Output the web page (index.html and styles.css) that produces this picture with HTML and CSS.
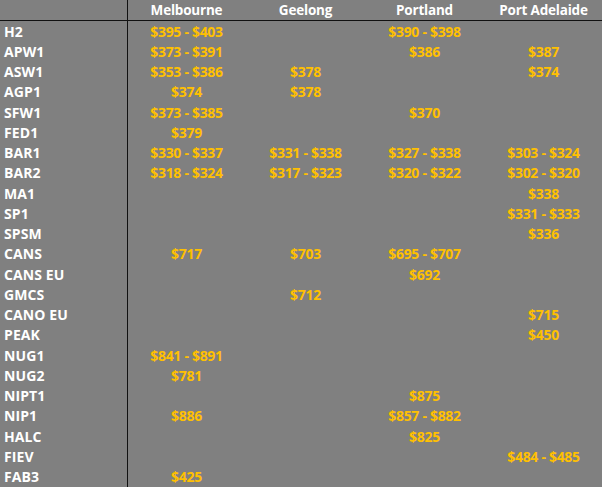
FILE: index.html
```html
<!DOCTYPE html>
<html>
<head>
<meta charset="utf-8">
<link rel="stylesheet" href="styles.css">
</head>
<body>
<div class="sheet">
  <div class="row head"><div class="label"></div><div class="cell">Melbourne</div><div class="cell">Geelong</div><div class="cell">Portland</div><div class="cell">Port Adelaide</div></div>
  <div class="row"><div class="label">H2</div><div class="cell">$395 - $403</div><div class="cell"></div><div class="cell">$390 - $398</div><div class="cell"></div></div>
  <div class="row"><div class="label">APW1</div><div class="cell">$373 - $391</div><div class="cell"></div><div class="cell">$386</div><div class="cell">$387</div></div>
  <div class="row"><div class="label">ASW1</div><div class="cell">$353 - $386</div><div class="cell">$378</div><div class="cell"></div><div class="cell">$374</div></div>
  <div class="row"><div class="label">AGP1</div><div class="cell">$374</div><div class="cell">$378</div><div class="cell"></div><div class="cell"></div></div>
  <div class="row"><div class="label">SFW1</div><div class="cell">$373 - $385</div><div class="cell"></div><div class="cell">$370</div><div class="cell"></div></div>
  <div class="row"><div class="label">FED1</div><div class="cell">$379</div><div class="cell"></div><div class="cell"></div><div class="cell"></div></div>
  <div class="row"><div class="label">BAR1</div><div class="cell">$330 - $337</div><div class="cell">$331 - $338</div><div class="cell">$327 - $338</div><div class="cell">$303 - $324</div></div>
  <div class="row"><div class="label">BAR2</div><div class="cell">$318 - $324</div><div class="cell">$317 - $323</div><div class="cell">$320 - $322</div><div class="cell">$302 - $320</div></div>
  <div class="row"><div class="label">MA1</div><div class="cell"></div><div class="cell"></div><div class="cell"></div><div class="cell">$338</div></div>
  <div class="row"><div class="label">SP1</div><div class="cell"></div><div class="cell"></div><div class="cell"></div><div class="cell">$331 - $333</div></div>
  <div class="row"><div class="label">SPSM</div><div class="cell"></div><div class="cell"></div><div class="cell"></div><div class="cell">$336</div></div>
  <div class="row"><div class="label">CANS</div><div class="cell">$717</div><div class="cell">$703</div><div class="cell">$695 - $707</div><div class="cell"></div></div>
  <div class="row"><div class="label">CANS EU</div><div class="cell"></div><div class="cell"></div><div class="cell">$692</div><div class="cell"></div></div>
  <div class="row"><div class="label">GMCS</div><div class="cell"></div><div class="cell">$712</div><div class="cell"></div><div class="cell"></div></div>
  <div class="row"><div class="label">CANO EU</div><div class="cell"></div><div class="cell"></div><div class="cell"></div><div class="cell">$715</div></div>
  <div class="row"><div class="label">PEAK</div><div class="cell"></div><div class="cell"></div><div class="cell"></div><div class="cell">$450</div></div>
  <div class="row"><div class="label">NUG1</div><div class="cell">$841 - $891</div><div class="cell"></div><div class="cell"></div><div class="cell"></div></div>
  <div class="row"><div class="label">NUG2</div><div class="cell">$781</div><div class="cell"></div><div class="cell"></div><div class="cell"></div></div>
  <div class="row"><div class="label">NIPT1</div><div class="cell"></div><div class="cell"></div><div class="cell">$875</div><div class="cell"></div></div>
  <div class="row"><div class="label">NIP1</div><div class="cell">$886</div><div class="cell"></div><div class="cell">$857 - $882</div><div class="cell"></div></div>
  <div class="row"><div class="label">HALC</div><div class="cell"></div><div class="cell"></div><div class="cell">$825</div><div class="cell"></div></div>
  <div class="row"><div class="label">FIEV</div><div class="cell"></div><div class="cell"></div><div class="cell"></div><div class="cell">$484 - $485</div></div>
  <div class="row"><div class="label">FAB3</div><div class="cell">$425</div><div class="cell"></div><div class="cell"></div><div class="cell"></div></div>
</div>
</body>
</html>
```
FILE: styles.css
```css
html, body {
  margin: 0;
  padding: 0;
  background: #808080;
}
.sheet {
  width: 602px;
  height: 487px;
  overflow: hidden;
  background: #808080;
  font-family: "Open Sans", Lato, sans-serif;
  font-weight: 700;
  font-size: 14px;
}
.row {
  display: grid;
  grid-template-columns: 128px repeat(4, 119px);
  height: 20.26px;
  align-items: stretch;
}
.row.head {
  height: 21px;
  border-bottom: 1px solid #111;
  box-sizing: border-box;
}
.label {
  border-right: 1px solid #111;
  padding-left: 4px;
  color: #ffffff;
  display: flex;
  align-items: center;
  white-space: nowrap;
  letter-spacing: 0.1px;
}
.cell {
  display: flex;
  align-items: center;
  justify-content: center;
  color: #ffc000;
  white-space: nowrap;
  padding-right: 2px;
  letter-spacing: -0.3px;
}
.head .cell {
  color: #ffffff;
  font-size: 13.5px;
  letter-spacing: -0.2px;
}
```
